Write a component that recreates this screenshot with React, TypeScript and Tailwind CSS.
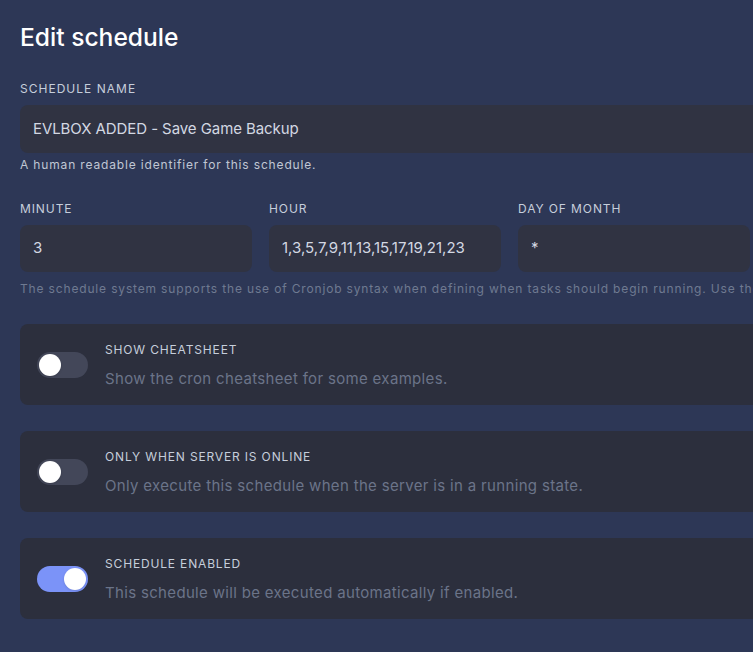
import { useState } from "react";

const fields = [
  { label: "Minute", value: "3" },
  { label: "Hour", value: "1,3,5,7,9,11,13,15,17,19,21,23" },
  { label: "Day of month", value: "*" },
  { label: "Month", value: "*" },
  { label: "Day of week", value: "*" },
];

const toggles = [
  { key: "cheat", title: "Show Cheatsheet", desc: "Show the cron cheatsheet for some examples.", on: false },
  { key: "online", title: "Only When Server Is Online", desc: "Only execute this schedule when the server is in a running state.", on: false },
  { key: "enabled", title: "Schedule Enabled", desc: "This schedule will be executed automatically if enabled.", on: true },
];

function Toggle({ on, onClick }: { on: boolean; onClick: () => void }) {
  return (
    <button
      onClick={onClick}
      className={`relative shrink-0 w-[51px] h-[26px] rounded-full ${on ? "bg-[#7b93f8]" : "bg-[#434759]"}`}
    >
      <span
        className={`absolute top-[2px] w-[22px] h-[22px] rounded-full bg-white shadow ${on ? "left-[27px]" : "left-[2px]"}`}
      />
    </button>
  );
}

export default function App() {
  const [state, setState] = useState<Record<string, boolean>>(
    Object.fromEntries(toggles.map(t => [t.key, t.on]))
  );

  return (
    <div className="w-[753px] h-[652px] overflow-hidden bg-[#2d3756] font-['Inter',sans-serif]">
      <div className="w-[1240px] px-5 pt-[22px]">
        <h1 className="text-[24.6px] leading-[30px] font-medium text-white">Edit schedule</h1>

        {/* Name */}
        <div className="mt-[29px]">
          <label className="block text-[12px] leading-4 uppercase tracking-[0.085em] text-[#c6cedb]">Schedule name</label>
          <div className="mt-[8px] h-[48px] rounded-lg bg-[#303342] flex items-center px-[13px] text-[15px] tracking-[-0.005em] text-[#d3d8e2]">
            EVLBOX ADDED - Save Game Backup
          </div>
          <p className="mt-[4px] text-[12px] leading-4 tracking-[0.07em] text-[#c0c7d4]">A human readable identifier for this schedule.</p>
        </div>

        {/* Cron fields */}
        <div className="mt-[28px] grid grid-cols-5 gap-x-[17px] w-[1228px]">
          {fields.map(f => (
            <div key={f.label}>
              <label className="block text-[12px] leading-4 uppercase tracking-[0.075em] text-[#c6cedb]">{f.label}</label>
              <div className="mt-[8px] h-[47px] rounded-lg bg-[#303342] flex items-center px-[13px] text-[15px] text-[#d3d8e2]">
                {f.value}
              </div>
            </div>
          ))}
        </div>
        <p className="mt-[9px] text-[12px] leading-4 tracking-[0.07em] text-[#6f7a91] whitespace-nowrap">
          The schedule system supports the use of Cronjob syntax when defining when tasks should begin running. Use the fields above to specify when these tasks should begin running.
        </p>

        {/* Toggles */}
        <div className="mt-[27px] flex flex-col gap-[26px]">
          {toggles.map(t => (
            <div key={t.key} className="h-[81px] rounded-lg bg-[#2c2f3d] flex items-center gap-[17px] pl-[17px]">
              <Toggle on={state[t.key]} onClick={() => setState(s => ({ ...s, [t.key]: !s[t.key] }))} />
              <div className="pt-[2px]">
                <p className="text-[12px] leading-4 uppercase tracking-[0.07em] text-[#c6cedb]">{t.title}</p>
                <p className="mt-[11px] text-[15px] leading-5 tracking-[0.022em] text-[#6b7489]">{t.desc}</p>
              </div>
            </div>
          ))}
        </div>
      </div>
    </div>
  );
}
